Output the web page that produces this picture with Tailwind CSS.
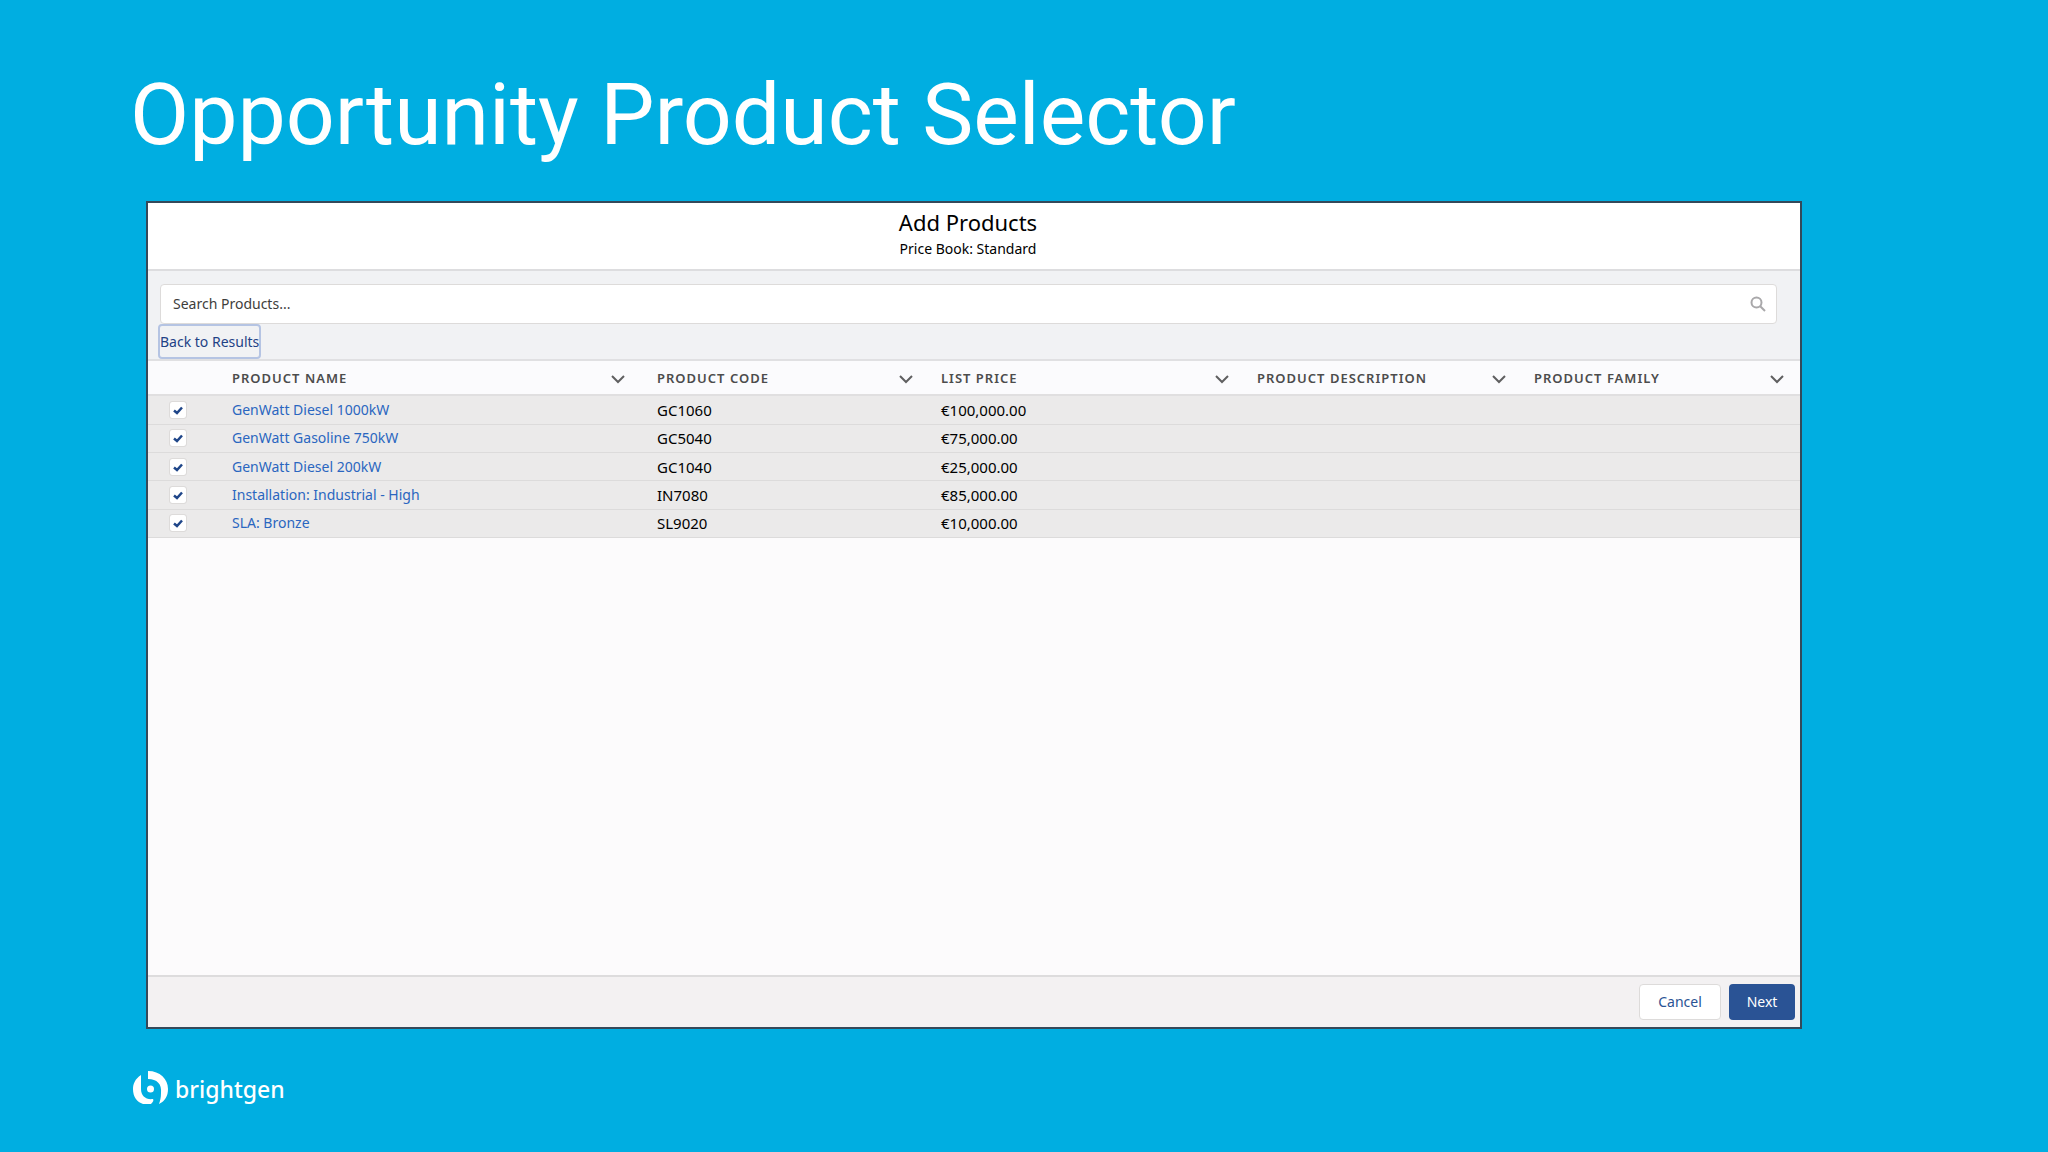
<!DOCTYPE html>
<html lang="en">

<head>
    <meta charset="UTF-8">
    <meta name="viewport" content="width=device-width, initial-scale=1.0">
    <title>Opportunity Product Selector</title>
    <script src="https://cdn.jsdelivr.net/npm/@tailwindcss/browser@4"></script>
</head>

<body class="flex min-h-screen flex-col bg-[#00aee1] font-['Noto_Sans',sans-serif] text-sm text-black">
    <h1 class="px-[130px] pt-[65px] font-['Roboto',sans-serif] text-[86px] leading-[100px] text-white">Opportunity Product Selector</h1>

    <main class="mt-9 mr-[246px] ml-[146px] flex flex-1 flex-col border-2 border-[#34495a] bg-[#fcfbfc]">
        <header class="flex h-[68px] flex-col items-center border-b-2 border-[#dddddf] bg-white pt-1 pr-3">
            <h2 class="text-[22px] leading-[30px]">Add Products</h2>
            <p class="text-sm leading-6">Price Book: Standard</p>
        </header>

        <div class="bg-[#f1f2f4] pt-[13px] pr-[23px] pl-3">
            <label class="flex h-10 items-center rounded border border-[#dddbda] bg-white pr-2.5 pl-3">
                <input type="text" aria-label="Search products" placeholder="Search Products..."
                    class="flex-1 outline-none placeholder:text-[#3e3e3c]">
                <svg class="size-4 text-[#a9a8aa]" viewBox="0 0 16 16" fill="none" stroke="currentColor" stroke-width="2">
                    <circle cx="6.5" cy="6.5" r="5" />
                    <path d="M10.2 10.2L15 15" />
                </svg>
            </label>
            <button class="-ml-0.5 block h-[35px] rounded border-2 border-[#b5c4e3] text-[#1f4286]">Back to Results</button>
        </div>

        <table class="h-[179px] w-full table-fixed border-t-2 border-[#e0e0e2] text-left">
            <colgroup>
                <col class="w-[72px]">
                <col class="w-[421px]">
                <col class="w-[288px]">
                <col class="w-[316px]">
                <col class="w-[277px]">
                <col class="w-[278px]">
            </colgroup>
            <thead class="bg-[#fbfbfd] text-[13px] tracking-[1px] text-[#4c4c4c]">
                <tr id="columns" class="h-[35px] border-b-2 border-[#e0dfe0]">
                    <td></td>
                </tr>
            </thead>
            <tbody id="products" class="bg-[#ebeaea]"></tbody>
        </table>

        <footer class="mt-auto flex h-[52px] items-center justify-end gap-2 border-t-2 border-[#dddcdd] bg-[#f3f1f2] pr-[5px]">
            <button class="h-9 w-[82px] rounded border border-[#dddbda] bg-white text-[#2a5394]">Cancel</button>
            <button class="h-9 w-[66px] rounded bg-[#2a5395] text-white">Next</button>
        </footer>
    </main>

    <div class="flex h-[123px] items-start gap-1.5 pt-[42px] pl-[133px] text-white">
        <svg class="size-9" viewBox="0 0 36 36" fill="currentColor">
            <path d="M8 4C2 8 0 13 0 18C0 26 4 31 10 33H18C20 31 21 29 20 28C13 29 8 25 8 18Z" />
            <path d="M15 0C27 0 35 8 35 18C35 25 32 30 26 33C27 30 28 27 28 22C29 13 24 8 15 8Z" />
            <circle cx="17.500" cy="18" r="3.500" />
        </svg>
        <span class="text-[23px] leading-9 font-medium">brightgen</span>
    </div>

    <script>
        const columns = ['Product Name', 'Product Code', 'List Price', 'Product Description', 'Product Family'];
        const products = [
            { name: 'GenWatt Diesel 1000kW', code: 'GC1060', price: '€100,000.00' },
            { name: 'GenWatt Gasoline 750kW', code: 'GC5040', price: '€75,000.00' },
            { name: 'GenWatt Diesel 200kW', code: 'GC1040', price: '€25,000.00' },
            { name: 'Installation: Industrial - High', code: 'IN7080', price: '€85,000.00' },
            { name: 'SLA: Bronze', code: 'SL9020', price: '€10,000.00' }
        ];

        columns.forEach((column, i) => {
            document.getElementById('columns').insertAdjacentHTML('beforeend', `
                <th class="${i === 1 ? 'pl-4' : 'pl-3'} pt-0.5 pr-[15px] font-semibold">
                    <div class="flex items-center justify-between uppercase">${column}
                        <button aria-label="${column} actions">
                            <svg class="h-4 w-4" viewBox="0 0 16 16" fill="none" stroke="#5f5f60" stroke-width="2"><path d="M2 5L8 11L14 5" /></svg>
                        </button>
                    </div>
                </th>`);
        });

        products.forEach(product => {
            document.getElementById('products').insertAdjacentHTML('beforeend', `
                <tr class="border-b border-[#dcdbdb] leading-5">
                    <td class="pl-[22px]">
                        <label class="relative block size-4">
                            <input type="checkbox" checked aria-label="${product.name}" class="block size-4 appearance-none rounded-xs bg-white outline outline-[#dddbda]">
                            <svg class="absolute inset-0 size-4" viewBox="0 0 16 16" fill="none" stroke="#1f4689" stroke-width="2.500"><path d="M4 8.500L7 11L12 5.500" /></svg>
                        </label>
                    </td>
                    <td class="pl-3"><a href="#" class="text-[#2a66c0]">${product.name}</a></td>
                    <td class="pl-4 text-[15px]">${product.code}</td>
                    <td class="pl-3 text-[15px]">${product.price}</td>
                    <td></td>
                    <td></td>
                </tr>`);
        });
    </script>
</body>

</html>
